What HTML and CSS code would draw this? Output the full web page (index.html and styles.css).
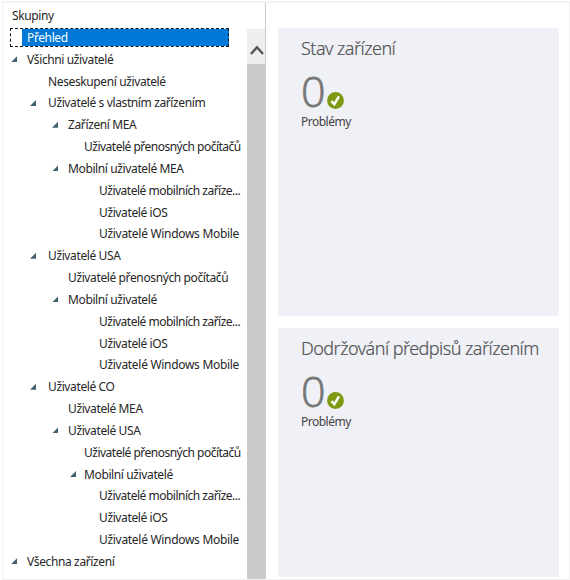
FILE: index.html
```html
<!DOCTYPE html>
<html lang="cs">
<head>
<meta charset="utf-8">
<title>Skupiny</title>
<link rel="stylesheet" href="styles.css">
</head>
<body>
<div class="window">
  <nav class="sidebar">
    <h1 class="heading">Skupiny</h1>
    <ul class="tree">
      <li class="row selected"><span>Přehled</span></li>
      <li class="row l0 open"><span>Všichni uživatelé</span></li>
      <li class="row l1"><span>Neseskupení uživatelé</span></li>
      <li class="row l1 open"><span>Uživatelé s vlastním zařízením</span></li>
      <li class="row l2 open"><span>Zařízení MEA</span></li>
      <li class="row l3 laptops"><span>Uživatelé přenosných počítačů</span></li>
      <li class="row l2 open"><span>Mobilní uživatelé MEA</span></li>
      <li class="row l4 mobile"><span>Uživatelé mobilních zaříze...</span></li>
      <li class="row l4"><span>Uživatelé iOS</span></li>
      <li class="row l4 windows"><span>Uživatelé Windows Mobile</span></li>
      <li class="row l1 open"><span>Uživatelé USA</span></li>
      <li class="row l2"><span>Uživatelé přenosných počítačů</span></li>
      <li class="row l2 open"><span>Mobilní uživatelé</span></li>
      <li class="row l4 mobile"><span>Uživatelé mobilních zaříze...</span></li>
      <li class="row l4"><span>Uživatelé iOS</span></li>
      <li class="row l4 windows"><span>Uživatelé Windows Mobile</span></li>
      <li class="row l1 open"><span>Uživatelé CO</span></li>
      <li class="row l2"><span>Uživatelé MEA</span></li>
      <li class="row l2 open"><span>Uživatelé USA</span></li>
      <li class="row l3 laptops"><span>Uživatelé přenosných počítačů</span></li>
      <li class="row l3 open"><span>Mobilní uživatelé</span></li>
      <li class="row l4 mobile"><span>Uživatelé mobilních zaříze...</span></li>
      <li class="row l4"><span>Uživatelé iOS</span></li>
      <li class="row l4 windows"><span>Uživatelé Windows Mobile</span></li>
      <li class="row l0 open"><span>Všechna zařízení</span></li>
    </ul>
  </nav>
  <div class="scrollbar">
    <div class="scroll-up"><svg width="16" height="12" viewBox="0 0 16 12"><path d="M2 10 8 3.3 14 10" fill="none" stroke="#555" stroke-width="2.4"/></svg></div>
    <div class="thumb"></div>
  </div>
  <main class="content">
    <section class="card">
      <h2 class="title">Stav zařízení</h2>
      <div class="metric"><span class="num">0</span><svg class="ok" width="17" height="17" viewBox="0 0 17 17"><circle cx="8.5" cy="8.5" r="8.4" fill="#7d9a12"/><path d="M4.4 9.2 7.3 12.2 12 4.4" fill="none" stroke="#fff" stroke-width="2.4"/></svg></div>
      <p class="label">Problémy</p>
    </section>
    <section class="card last">
      <h2 class="title compliance">Dodržování předpisů zařízením</h2>
      <div class="metric"><span class="num">0</span><svg class="ok" width="17" height="17" viewBox="0 0 17 17"><circle cx="8.5" cy="8.5" r="8.4" fill="#7d9a12"/><path d="M4.4 9.2 7.3 12.2 12 4.4" fill="none" stroke="#fff" stroke-width="2.4"/></svg></div>
      <p class="label">Problémy</p>
    </section>
  </main>
</div>
</body>
</html>
```
FILE: styles.css
```css
* { box-sizing: border-box; }
body { margin: 0; width: 570px; height: 580px; overflow: hidden; background: #fff; font-family: "Noto Sans", "Open Sans", sans-serif; color: #262626; }
h1, h2, p, ul { margin: 0; padding: 0; font-weight: 400; }
.window { display: flex; width: 568px; height: 579px; margin: 1px 0 0 2px; border: 1px solid #f2f2f5; border-top-width: 2px; }
.sidebar { width: 244px; flex: none; }
.heading { height: 25px; padding: 3px 0 0 9px; font-size: 12px; line-height: 20px; letter-spacing: -0.4px; }
.tree { list-style: none; font-size: 12px; letter-spacing: -0.38px; }
.row { position: relative; display: flex; align-items: center; height: 21.83px; white-space: nowrap; }
.row span { line-height: 18px; }
.laptops { letter-spacing: -0.5px; }
.mobile { letter-spacing: -0.5px; }
.windows { letter-spacing: -0.3px; }
.selected { height: 19px; width: 219px; margin: 0 0 1.9px 7px; padding-left: 16px; color: #fff; background: linear-gradient(#0078d7, #0078d7) 11px 0 / 207px 100% no-repeat; border: 1px dashed #111; }
.l0 { padding-left: 24px; }
.l1 { padding-left: 45px; }
.l2 { padding-left: 65px; }
.l3 { padding-left: 81px; }
.l4 { padding-left: 96px; }
.open::before { content: ""; width: 6px; height: 6px; margin: 0 10px 1px 0; background: #3f626e; clip-path: polygon(100% 0, 100% 100%, 0 100%); }
.l0.open { padding-left: 8px; }
.l1.open { padding-left: 27px; }
.l1.open::before { margin-right: 12px; }
.l2.open { padding-left: 49px; }
.l3.open { padding-left: 67px; }
.l3.open::before { margin-right: 8px; }
.scrollbar { width: 19px; flex: none; padding-top: 26px; display: flex; flex-direction: column; border-right: 1px solid #ccc; }
.scroll-up { height: 35px; display: flex; align-items: center; justify-content: center; padding: 7px 0 0 2px; background: #eee; }
.thumb { flex: 1; background: #cacaca; }
.content { padding: 25px 0 0 12px; display: flex; flex-direction: column; gap: 12px; }
.card { width: 281px; height: 288px; padding: 7px 0 0 23px; background: #f0f1f7; white-space: nowrap; }
.last { height: 249px; }
.title { height: 28px; line-height: 27px; font-family: "Noto Sans", sans-serif; font-size: 18px; font-weight: 350; color: #555; letter-spacing: -0.53px; -webkit-text-stroke: 0.2px #555; }
.metric { display: flex; height: 47px; align-items: flex-end; }
.num { width: 26px; height: 38px; line-height: 38px; font-family: "Open Sans", sans-serif; font-size: 43px; font-weight: 350; color: #777; -webkit-text-stroke: 0.8px #777; }
.ok { margin-bottom: 1px; }
.label { padding-top: 3px; line-height: 18px; font-size: 12px; letter-spacing: -0.5px; color: #444; }
```
